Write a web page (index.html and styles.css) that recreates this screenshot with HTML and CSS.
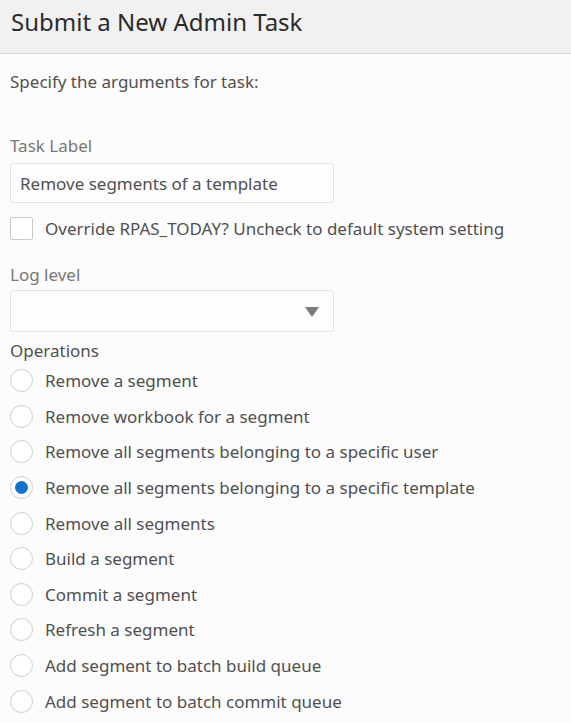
FILE: index.html
```html
<!DOCTYPE html>
<html>
<head>
<meta charset="utf-8">
<link rel="stylesheet" href="styles.css">
</head>
<body>
<header class="hdr"><h1 class="title">Submit a New Admin Task</h1></header>
<main class="content">
  <p class="intro">Specify the arguments for task:</p>
  <div class="field">
    <label class="lbl">Task Label</label>
    <div class="input">Remove segments of a template</div>
  </div>
  <div class="check-row">
    <span class="checkbox"></span>
    <span class="opt">Override RPAS_TODAY? Uncheck to default system setting</span>
  </div>
  <div class="field field-log">
    <label class="lbl">Log level</label>
    <div class="select"><span class="arrow"></span></div>
  </div>
  <div class="ops-lbl">Operations</div>
  <ul class="radios">
    <li class="radio-row"><span class="radio"></span><span class="opt">Remove a segment</span></li>
    <li class="radio-row"><span class="radio"></span><span class="opt">Remove workbook for a segment</span></li>
    <li class="radio-row"><span class="radio"></span><span class="opt">Remove all segments belonging to a specific user</span></li>
    <li class="radio-row"><span class="radio on"></span><span class="opt">Remove all segments belonging to a specific template</span></li>
    <li class="radio-row"><span class="radio"></span><span class="opt">Remove all segments</span></li>
    <li class="radio-row"><span class="radio"></span><span class="opt">Build a segment</span></li>
    <li class="radio-row"><span class="radio"></span><span class="opt">Commit a segment</span></li>
    <li class="radio-row"><span class="radio"></span><span class="opt">Refresh a segment</span></li>
    <li class="radio-row"><span class="radio"></span><span class="opt">Add segment to batch build queue</span></li>
    <li class="radio-row"><span class="radio"></span><span class="opt">Add segment to batch commit queue</span></li>
  </ul>
</main>
</body>
</html>
```
FILE: styles.css
```css
* { box-sizing: border-box; }
html, body { margin: 0; padding: 0; }
body {
  background: #fcfcfc;
  font-family: "Noto Sans", "Open Sans", sans-serif;
  color: #505050;
  font-size: 17px;
  overflow: hidden;
}
.hdr {
  height: 54px;
  background: #f1f1f1;
  border-bottom: 1px solid #d7d7d7;
  padding: 0 11px;
  display: flex;
  align-items: center;
}
.title {
  margin: 0;
  font-weight: 400;
  font-size: 24px;
  color: #2b2b2b;
  line-height: 1;
  position: relative;
  top: -5px;
}
.content { padding: 0 10px; }
.intro {
  margin: 0;
  padding-top: 17px;
  line-height: 22px;
  color: #505050;
}
.field { display: flex; flex-direction: column; }
.lbl {
  margin-top: 42px;
  line-height: 22px;
  color: #777777;
}
.input {
  margin-top: 6px;
  width: 324px;
  height: 40px;
  border: 1px solid #e4e4e4;
  border-radius: 3px;
  background: #fdfdfd;
  padding: 0 9px;
  display: flex;
  align-items: center;
  color: #505050;
}
.check-row {
  display: flex;
  align-items: center;
  gap: 12px;
  margin-top: 13px;
  height: 24px;
}
.checkbox {
  width: 23px;
  height: 23px;
  border: 1px solid #c9c9c9;
  border-radius: 2px;
  background: #fff;
  flex: none;
}
.field-log .lbl { margin-top: 24px; }
.select {
  margin-top: 4px;
  width: 324px;
  height: 42px;
  border: 1px solid #e4e4e4;
  border-radius: 3px;
  background: #fdfdfd;
  display: flex;
  align-items: center;
  justify-content: flex-end;
  padding-right: 14px;
}
.arrow {
  width: 0; height: 0;
  border-left: 7px solid transparent;
  border-right: 7px solid transparent;
  border-top: 10px solid #7a7a7a;
  margin-top: 2px;
}
.ops-lbl {
  margin-top: 8px;
  line-height: 22px;
  color: #505050;
}
.radios { list-style: none; margin: 1px 0 0; padding: 0; }
.radio-row {
  height: 35.6px;
  display: flex;
  align-items: center;
  gap: 12px;
}
.radio {
  width: 23px;
  height: 23px;
  border: 1.5px solid #cdcdcd;
  border-radius: 50%;
  background: #fff;
  flex: none;
  display: flex;
  align-items: center;
  justify-content: center;
}
.radio.on::after {
  content: "";
  width: 13px;
  height: 13px;
  border-radius: 50%;
  background: #0f74c9;
}
.opt { color: #505050; white-space: nowrap; }
```
